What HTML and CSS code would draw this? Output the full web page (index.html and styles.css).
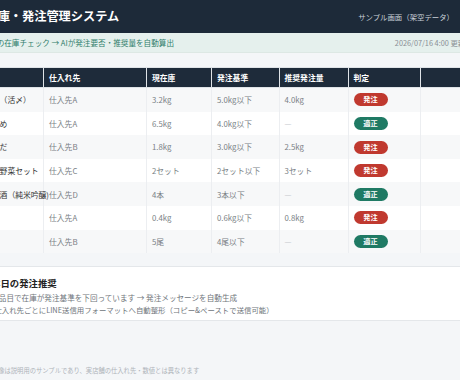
FILE: index.html
```html
<!DOCTYPE html>
<html lang="ja">
<head>
<meta charset="utf-8">
<link rel="stylesheet" href="styles.css">
</head>
<body>
<header class="topbar">
  <h1 class="title">在庫・発注管理システム</h1>
  <span class="sample">サンプル画面（架空データ）</span>
</header>
<div class="subbar">
  <span class="flow">毎朝の在庫チェック → AIが発注要否・推奨量を自動算出</span>
  <span class="updated">2026/07/16 4:00 更新</span>
</div>
<div class="table-wrap">
<table class="stock">
  <colgroup>
    <col class="w-name"><col class="w-sup"><col class="w-cur"><col class="w-th"><col class="w-rec"><col class="w-jd"><col class="w-memo">
  </colgroup>
  <thead>
    <tr><th>品目</th><th>仕入れ先</th><th>現在庫</th><th>発注基準</th><th>推奨発注量</th><th>判定</th><th></th></tr>
  </thead>
  <tbody>
    <tr><td class="name">真鯛（活〆）</td><td>仕入先A</td><td>3.2kg</td><td>5.0kg以下</td><td>4.0kg</td><td><span class="badge order">発注</span></td><td></td></tr>
    <tr><td class="name">ひらめ</td><td>仕入先A</td><td>6.5kg</td><td>4.0kg以下</td><td class="dash">—</td><td><span class="badge ok">適正</span></td><td></td></tr>
    <tr><td class="name">いなだ</td><td>仕入先B</td><td>1.8kg</td><td>3.0kg以下</td><td>2.5kg</td><td><span class="badge order">発注</span></td><td></td></tr>
    <tr><td class="name">旬の野菜セット</td><td>仕入先C</td><td>2セット</td><td>2セット以下</td><td>3セット</td><td><span class="badge order">発注</span></td><td></td></tr>
    <tr><td class="name">日本酒（純米吟醸)</td><td>仕入先D</td><td>4本</td><td>3本以下</td><td class="dash">—</td><td><span class="badge ok">適正</span></td><td></td></tr>
    <tr><td class="name">うに</td><td>仕入先A</td><td>0.4kg</td><td>0.6kg以下</td><td>0.8kg</td><td><span class="badge order">発注</span></td><td></td></tr>
    <tr><td class="name">あじ</td><td>仕入先B</td><td>5尾</td><td>4尾以下</td><td class="dash">—</td><td><span class="badge ok">適正</span></td><td></td></tr>
  </tbody>
</table>
</div>
<section class="card">
  <h2 class="card-title">本日の発注推奨</h2>
  <div class="card-lines">
    <p class="line">・4品目で在庫が発注基準を下回っています → 発注メッセージを自動生成</p>
    <p class="line line2">・仕入れ先ごとにLINE送信用フォーマットへ自動整形（コピー&amp;ペーストで送信可能）</p>
  </div>
</section>
<footer class="note">※この画像は説明用のサンプルであり、実店舗の仕入れ先・数値とは異なります</footer>
</body>
</html>
```
FILE: styles.css
```css
html, body {
  margin: 0;
  padding: 0;
}
body {
  width: 460px;
  height: 380px;
  overflow: hidden;
  background: #f4f6f8;
  font-family: "Noto Sans CJK JP", "Noto Sans", sans-serif;
  color: #333;
}
.topbar {
  height: 33px;
  background: #1d2a39;
  display: flex;
  align-items: center;
  justify-content: space-between;
  padding-right: 6px;
}
.title {
  margin: 0 0 0 -14.5px;
  font-size: 12.2px;
  font-weight: 700;
  color: #fff;
  white-space: nowrap;
  line-height: 1;
}
.sample {
  flex: none;
  font-size: 7.4px;
  color: #c9d0d8;
  white-space: nowrap;
}
.subbar {
  height: 19px;
  background: #e5f0ed;
  border-bottom: 1px solid #dde8e4;
  display: flex;
  align-items: center;
  justify-content: space-between;
  margin-right: -5px;
}
.flow {
  margin-left: -18.5px;
  font-size: 7.6px;
  color: #2f7d6b;
  white-space: nowrap;
}
.updated {
  flex: none;
  font-size: 7.3px;
  color: #8a8f95;
  white-space: nowrap;
}
.table-wrap {
  margin: 14px 0 0 -22px;
}
.stock {
  border-collapse: collapse;
  table-layout: fixed;
  width: 522px;
  font-size: 7.8px;
}
.w-name { width: 65px; }
.w-sup { width: 103px; }
.w-cur { width: 65px; }
.w-th { width: 67.5px; }
.w-rec { width: 69px; }
.w-jd { width: 72.5px; }
.w-memo { width: 80px; }
.stock th {
  background: #1e2b3a;
  color: #fff;
  font-weight: 700;
  text-align: left;
  height: 19px;
  padding: 0 0 0 5px;
  border: 1px solid #dfe3e7;
  white-space: nowrap;
}
.stock td {
  height: 23.6px;
  padding: 0 0 0 5px;
  border: 1px solid #eceef1;
  border-top: none;
  border-bottom: none;
  color: #7a7f85;
  white-space: nowrap;
}
.stock tbody tr:nth-child(odd) td { background: #f7f8f9; }
.stock tbody tr:nth-child(even) td { background: #fff; }
.stock td.name {
  color: #333;
  overflow: visible;
}
.stock td.dash { color: #c2c6ca; }
.badge {
  display: inline-block;
  width: 34px;
  height: 13px;
  line-height: 13px;
  border-radius: 7px;
  font-size: 7.2px;
  font-weight: 700;
  color: #fff;
  text-align: center;
  vertical-align: middle;
}
.badge.order { background: #c0392f; }
.badge.ok { background: #1f7a64; }
.card {
  margin: 13px 0 0 -20px;
  padding: 10px 0 4px 11px;
  background: #fff;
  border-top: 1px solid #e4e7ea;
  border-bottom: 1px solid #e4e7ea;
}
.card-title {
  margin: 0 0 2px;
  font-size: 9.4px;
  font-weight: 700;
  color: #222;
  line-height: 13px;
  white-space: nowrap;
}
.card-lines {
  margin-left: -4px;
}
.line {
  margin: 0;
  font-size: 7.6px;
  line-height: 12px;
  color: #6f757b;
  white-space: nowrap;
}
.line2 {
  font-size: 7.4px;
}
.note {
  margin: 45px 0 0 -27px;
  font-size: 6.3px;
  line-height: 10px;
  color: #aeb3b8;
  white-space: nowrap;
}
```
